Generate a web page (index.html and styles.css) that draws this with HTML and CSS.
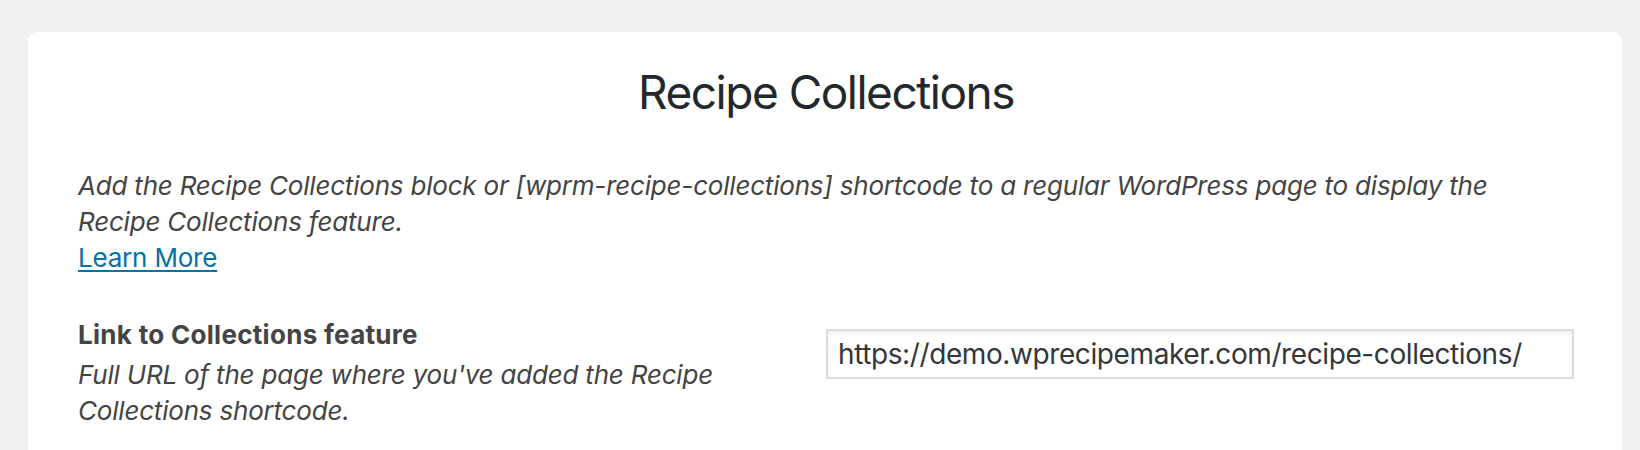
FILE: index.html
```html
<!DOCTYPE html>
<html lang="en">
<head>
<meta charset="utf-8">
<title>Recipe Collections</title>
<link rel="stylesheet" href="styles.css">
</head>
<body>
<main class="card">
  <h1 class="card-title">Recipe Collections</h1>
  <p class="intro">Add the Recipe Collections block or [wprm-recipe-collections] shortcode to a regular WordPress page to display the Recipe Collections feature.<br><a class="learn-more" href="#">Learn More</a></p>
  <div class="setting">
    <div class="setting-info">
      <div class="setting-label">Link to Collections feature</div>
      <div class="setting-desc">Full URL of the page where you've added the Recipe Collections shortcode.</div>
    </div>
    <div class="setting-field">
      <input class="text-input" type="text" value="https://demo.wprecipemaker.com/recipe-collections/">
    </div>
  </div>
</main>
</body>
</html>
```
FILE: styles.css
```css
html, body {
  margin: 0;
  padding: 0;
}
body {
  background: #f1f1f1;
  font-family: Inter, "Noto Sans", "Liberation Sans", sans-serif;
  color: #444444;
  padding: 32px 18px 0 28px;
  overflow: hidden;
}
.card {
  background: #ffffff;
  border-radius: 9px;
  padding: 31px 48px 60px 50px;
  min-height: 500px;
}
.card-title {
  margin: 0;
  text-align: center;
  font-size: 46px;
  line-height: 58px;
  font-weight: 400;
  letter-spacing: -1.5px;
  color: #23282d;
}
.intro {
  margin: 47px 0 0;
  font-size: 26px;
  line-height: 36px;
  font-style: italic;
  letter-spacing: -0.2px;
  color: #444444;
}
.learn-more {
  font-style: normal;
  color: #0073aa;
  text-decoration: underline;
  text-decoration-thickness: 2px;
  text-underline-offset: 3px;
}
.setting {
  display: grid;
  grid-template-columns: 1fr 1fr;
  margin-top: 41px;
  align-items: start;
}
.setting-label {
  font-size: 26px;
  line-height: 36px;
  font-weight: 700;
  letter-spacing: 0.3px;
  color: #444444;
  margin-bottom: 4px;
}
.setting-desc {
  font-size: 26px;
  line-height: 36px;
  font-style: italic;
  letter-spacing: -0.2px;
  color: #444444;
  padding-right: 60px;
}
.setting-field {
  padding-top: 12px;
}
.text-input {
  display: block;
  box-sizing: border-box;
  width: 100%;
  height: 50px;
  margin: 0;
  padding: 0 10px;
  border: 2px solid #dddddd;
  border-radius: 0;
  box-shadow: inset 0 2px 4px rgba(0, 0, 0, 0.07);
  font-family: Inter, "Noto Sans", "Liberation Sans", sans-serif;
  font-size: 28px;
  letter-spacing: -0.4px;
  color: #32373c;
  background: #ffffff;
  outline: none;
}
```
